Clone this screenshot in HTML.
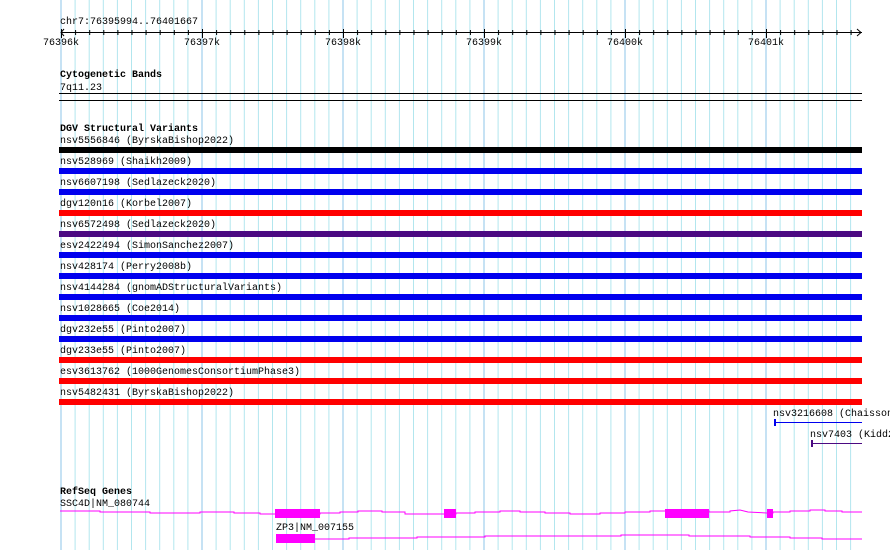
<!DOCTYPE html>
<html><head><meta charset="utf-8"><style>
html,body{margin:0;padding:0;background:#fff;width:890px;height:550px;overflow:hidden}
svg text{font-family:"Liberation Mono","DejaVu Sans Mono",monospace;font-size:10px}
.b{font-weight:bold}
</style></head><body>
<svg width="890" height="550" xmlns="http://www.w3.org/2000/svg">
<defs>
<pattern id="g" patternUnits="userSpaceOnUse" x="60.5" y="0" width="141" height="550">
<line x1="0.5" y1="0" x2="0.5" y2="550" stroke="#8cc4ea"/>
<g stroke="#b2e6ee">
<line x1="14.6" y1="0" x2="14.6" y2="550"/><line x1="28.7" y1="0" x2="28.7" y2="550"/>
<line x1="42.8" y1="0" x2="42.8" y2="550"/><line x1="56.9" y1="0" x2="56.9" y2="550"/>
<line x1="71" y1="0" x2="71" y2="550"/><line x1="85.1" y1="0" x2="85.1" y2="550"/>
<line x1="99.2" y1="0" x2="99.2" y2="550"/><line x1="113.3" y1="0" x2="113.3" y2="550"/>
<line x1="127.4" y1="0" x2="127.4" y2="550"/></g>
</pattern>
</defs>
<rect x="60" y="0" width="802" height="550" fill="url(#g)"/>
<!-- ruler -->
<text x="60" y="24">chr7:76395994..76401667</text>
<line x1="61" y1="32.5" x2="862" y2="32.5" stroke="#000"/>
<path d="M64 29 L61 32.5 L64 36" fill="none" stroke="#000"/>
<path d="M857 29 L861 32.5 L857 36" fill="none" stroke="#000"/>
<g stroke="#000">
<line x1="61.5" y1="29" x2="61.5" y2="38"/><line x1="202.5" y1="29" x2="202.5" y2="38"/>
<line x1="343.5" y1="29" x2="343.5" y2="38"/><line x1="484.5" y1="29" x2="484.5" y2="38"/>
<line x1="625.5" y1="29" x2="625.5" y2="38"/><line x1="766.5" y1="29" x2="766.5" y2="38"/>
</g>
<g stroke="#000">
<path d="M75.6 30v5M89.7 30v5M103.8 30v5M117.9 30v5M132 30v5M146.1 30v5M160.2 30v5M174.3 30v5M188.4 30v5M216.6 30v5M230.7 30v5M244.8 30v5M258.9 30v5M273 30v5M287.1 30v5M301.2 30v5M315.3 30v5M329.4 30v5M357.6 30v5M371.7 30v5M385.8 30v5M399.9 30v5M414 30v5M428.1 30v5M442.2 30v5M456.3 30v5M470.4 30v5M498.6 30v5M512.7 30v5M526.8 30v5M540.9 30v5M555 30v5M569.1 30v5M583.2 30v5M597.3 30v5M611.4 30v5M639.6 30v5M653.7 30v5M667.8 30v5M681.9 30v5M696 30v5M710.1 30v5M724.2 30v5M738.3 30v5M752.4 30v5M780.6 30v5M794.7 30v5M808.8 30v5M822.9 30v5M837 30v5M851.1 30v5"/>
</g>
<g text-anchor="middle">
<text x="61" y="45">76396k</text><text x="202" y="45">76397k</text><text x="343" y="45">76398k</text>
<text x="484" y="45">76399k</text><text x="625" y="45">76400k</text><text x="766" y="45">76401k</text>
</g>
<!-- cytobands -->
<text x="60" y="77" class="b">Cytogenetic Bands</text>
<text x="60" y="90">7q11.23</text>
<rect x="59" y="93" width="803" height="1" fill="#000"/>
<rect x="59" y="100" width="803" height="1" fill="#000"/>
<!-- DGV -->
<text x="60" y="131" class="b">DGV Structural Variants</text>
<g>
<text x="60" y="143">nsv5556846 (ByrskaBishop2022)</text><rect x="59" y="147" width="803" height="6" fill="#000"/>
<text x="60" y="164">nsv528969 (Shaikh2009)</text><rect x="59" y="168" width="803" height="6" fill="#0000ee"/>
<text x="60" y="185">nsv6607198 (Sedlazeck2020)</text><rect x="59" y="189" width="803" height="6" fill="#0000ee"/>
<text x="60" y="206">dgv120n16 (Korbel2007)</text><rect x="59" y="210" width="803" height="6" fill="#ff0000"/>
<text x="60" y="227">nsv6572498 (Sedlazeck2020)</text><rect x="59" y="231" width="803" height="6" fill="#4b0a82"/>
<text x="60" y="248">esv2422494 (SimonSanchez2007)</text><rect x="59" y="252" width="803" height="6" fill="#0000ee"/>
<text x="60" y="269">nsv428174 (Perry2008b)</text><rect x="59" y="273" width="803" height="6" fill="#0000ee"/>
<text x="60" y="290">nsv4144284 (gnomADStructuralVariants)</text><rect x="59" y="294" width="803" height="6" fill="#0000ee"/>
<text x="60" y="311">nsv1028665 (Coe2014)</text><rect x="59" y="315" width="803" height="6" fill="#0000ee"/>
<text x="60" y="332">dgv232e55 (Pinto2007)</text><rect x="59" y="336" width="803" height="6" fill="#0000ee"/>
<text x="60" y="353">dgv233e55 (Pinto2007)</text><rect x="59" y="357" width="803" height="6" fill="#ff0000"/>
<text x="60" y="374">esv3613762 (1000GenomesConsortiumPhase3)</text><rect x="59" y="378" width="803" height="6" fill="#ff0000"/>
<text x="60" y="395">nsv5482431 (ByrskaBishop2022)</text><rect x="59" y="399" width="803" height="6" fill="#ff0000"/>
<text x="773" y="416">nsv3216608 (Chaisson</text>
<rect x="774" y="422" width="88" height="1" fill="#0000ee"/><rect x="774" y="419" width="2" height="7" fill="#0000ee"/>
<text x="810" y="437">nsv7403 (Kidd2</text>
<rect x="811" y="443" width="51" height="1" fill="#4b0a82"/><rect x="811" y="440" width="2" height="7" fill="#4b0a82"/>
</g>
<!-- RefSeq -->
<text x="60" y="494" class="b">RefSeq Genes</text>
<text x="60" y="506">SSC4D|NM_080744</text>
<polyline fill="none" stroke="#ff00ff" points="60,511 100,511 100,512 150,512 150,513 200,513 200,512 234,512 234,513 260,513 260,514 275,514 320,514 320,513 340,513 340,512 358,512 358,511 382,511 382,512 405,512 405,514 444,514 456,514 456,513 475,513 475,512 500,512 500,511 520,511 520,512 545,512 545,513 570,513 570,514 600,514 600,513 625,513 625,512 650,512 650,511 665,511 709,511 709,512 730,512 730,511 740,510 748,512 767,513 773,513 773,512 790,512 790,511 810,511 810,510 825,510 825,511 842,511 842,512 862,512"/>
<rect x="275" y="509" width="45" height="9" fill="#ff00ff"/>
<rect x="444" y="509" width="12" height="9" fill="#ff00ff"/>
<rect x="665" y="509" width="44" height="9" fill="#ff00ff"/>
<rect x="767" y="509" width="6" height="9" fill="#ff00ff"/>
<text x="276" y="530">ZP3|NM_007155</text>
<polyline fill="none" stroke="#ff00ff" points="315,539 349,539 349,538 417,538 417,537 485,537 485,536 621,536 621,535 689,535 689,536 750,536 750,537 790,537 790,538 822,538 822,539 862,539"/>
<rect x="276" y="534" width="39" height="9" fill="#ff00ff"/>
</svg>
</body></html>
